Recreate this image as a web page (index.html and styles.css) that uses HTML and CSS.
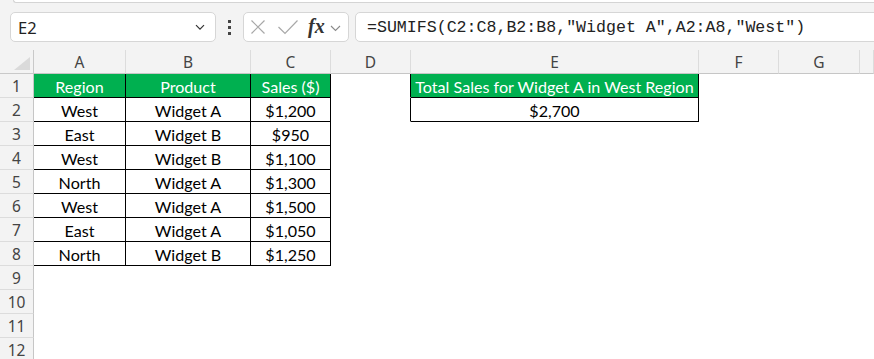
FILE: index.html
```html
<!DOCTYPE html>
<html>
<head>
<meta charset="utf-8">
<link rel="stylesheet" href="styles.css">
</head>
<body>
<div class="ribbon-edge"></div>
<div class="formula-bar">
  <div class="namebox">
    <span class="ref">E2</span>
    <svg class="nb-chev" width="10" height="7" viewBox="0 0 10 7"><path d="M1 1.2L5 5.2L9 1.2" fill="none" stroke="#333" stroke-width="1.2"/></svg>
  </div>
  <div class="dots"><span></span><span></span><span></span></div>
  <div class="fxbox">
    <svg class="ic-x" width="16" height="16" viewBox="0 0 16 16"><path d="M1.5 1.5L14.5 14.5M14.5 1.5L1.5 14.5" fill="none" stroke="#a8a8a8" stroke-width="1.2"/></svg>
    <svg class="ic-ok" width="22" height="16" viewBox="0 0 22 16"><path d="M1.5 8L8 14.5L20.5 1.5" fill="none" stroke="#a8a8a8" stroke-width="1.2"/></svg>
    <span class="fx">fx</span>
    <svg class="fx-chev" width="11" height="7" viewBox="0 0 11 7"><path d="M1 1L5.5 5.5L10 1" fill="none" stroke="#8a8a8a" stroke-width="1.1"/></svg>
  </div>
  <div class="formula">=SUMIFS(C2:C8,B2:B8,"Widget A",A2:A8,"West")</div>
</div>

<div class="sheet">
  <div class="corner"><svg width="34" height="24" viewBox="0 0 34 24"><path d="M30 7L30 20L14 20Z" fill="#dadada"/></svg></div>
  <div class="ch">A</div><div class="ch">B</div><div class="ch">C</div><div class="ch">D</div><div class="ch">E</div><div class="ch">F</div><div class="ch">G</div><div class="ch"></div>

  <div class="rh">1</div>
  <div class="c hd">Region</div><div class="c hd">Product</div><div class="c hd">Sales ($)</div>
  <div class="c rb"></div><div class="c hd">Total Sales for Widget A in West Region</div><div class="c"></div><div class="c"></div><div class="c"></div>

  <div class="rh">2</div>
  <div class="c bd">West</div><div class="c bd">Widget A</div><div class="c bd">$1,200</div>
  <div class="c rb"></div><div class="c bd">$2,700</div><div class="c"></div><div class="c"></div><div class="c"></div>

  <div class="rh">3</div>
  <div class="c bd">East</div><div class="c bd">Widget B</div><div class="c bd">$950</div>
  <div class="c"></div><div class="c"></div><div class="c"></div><div class="c"></div><div class="c"></div>

  <div class="rh">4</div>
  <div class="c bd">West</div><div class="c bd">Widget B</div><div class="c bd">$1,100</div>
  <div class="c"></div><div class="c"></div><div class="c"></div><div class="c"></div><div class="c"></div>

  <div class="rh">5</div>
  <div class="c bd">North</div><div class="c bd">Widget A</div><div class="c bd">$1,300</div>
  <div class="c"></div><div class="c"></div><div class="c"></div><div class="c"></div><div class="c"></div>

  <div class="rh">6</div>
  <div class="c bd">West</div><div class="c bd">Widget A</div><div class="c bd">$1,500</div>
  <div class="c"></div><div class="c"></div><div class="c"></div><div class="c"></div><div class="c"></div>

  <div class="rh">7</div>
  <div class="c bd">East</div><div class="c bd">Widget A</div><div class="c bd">$1,050</div>
  <div class="c"></div><div class="c"></div><div class="c"></div><div class="c"></div><div class="c"></div>

  <div class="rh">8</div>
  <div class="c bd">North</div><div class="c bd">Widget B</div><div class="c bd">$1,250</div>
  <div class="c"></div><div class="c"></div><div class="c"></div><div class="c"></div><div class="c"></div>

  <div class="rh">9</div>
  <div class="c"></div><div class="c"></div><div class="c"></div><div class="c"></div><div class="c"></div><div class="c"></div><div class="c"></div><div class="c"></div>

  <div class="rh">10</div>
  <div class="c"></div><div class="c"></div><div class="c"></div><div class="c"></div><div class="c"></div><div class="c"></div><div class="c"></div><div class="c"></div>

  <div class="rh">11</div>
  <div class="c"></div><div class="c"></div><div class="c"></div><div class="c"></div><div class="c"></div><div class="c"></div><div class="c"></div><div class="c"></div>

  <div class="rh">12</div>
  <div class="c"></div><div class="c"></div><div class="c"></div><div class="c"></div><div class="c"></div><div class="c"></div><div class="c"></div><div class="c"></div>
</div>
</body>
</html>
```

FILE: styles.css
```css
* { box-sizing: border-box; }

html, body {
  margin: 0;
  padding: 0;
  width: 874px;
  height: 359px;
  overflow: hidden;
  background: #f3f3f3;
  font-family: "Noto Sans", "Open Sans", sans-serif;
}

.ribbon-edge {
  height: 3px;
  margin-left: 13px;
  background: #ffffff;
  border-bottom: 1px solid #d4d4d4;
  border-left: 1px solid #d4d4d4;
  border-bottom-left-radius: 5px;
}

.formula-bar {
  height: 47px;
  display: flex;
  align-items: flex-start;
  padding-top: 9px;
  padding-left: 10px;
}

.namebox {
  width: 206px;
  height: 30px;
  background: #fff;
  border: 1px solid #d6d6d6;
  border-radius: 5px;
  display: flex;
  align-items: center;
  justify-content: space-between;
  padding: 0 10px 0 7px;
}

.ref {
  font-family: "Noto Sans", sans-serif;
  font-size: 16.5px;
  color: #222;
}

.dots {
  width: 27px;
  height: 30px;
  display: flex;
  flex-direction: column;
  align-items: center;
  justify-content: center;
  gap: 3px;
}

.dots span {
  display: block;
  width: 3px;
  height: 3px;
  background: #444;
}

.fxbox {
  width: 106px;
  height: 30px;
  background: #fff;
  border: 1px solid #d6d6d6;
  border-radius: 5px;
  display: flex;
  align-items: center;
  padding-left: 6px;
}

.ic-x { margin-right: 11px; }
.ic-ok { margin-right: 9px; }

.fx {
  font-family: "Liberation Serif", "DejaVu Serif", serif;
  font-style: italic;
  font-weight: bold;
  font-size: 20px;
  color: #333;
  letter-spacing: 0px;
  margin-top: -2px;
}

.fx-chev { margin-left: 5px; margin-top: 2px; }

.formula {
  flex: 1;
  margin-left: 6px;
  margin-right: -20px;
  height: 30px;
  background: #fff;
  border: 1px solid #d6d6d6;
  border-radius: 5px;
  padding-left: 11px;
  display: flex;
  align-items: center;
  font-family: "Liberation Mono", "DejaVu Sans Mono", monospace;
  font-size: 16.6px;
  color: #222;
  white-space: pre;
}

.sheet {
  display: grid;
  grid-template-columns: 34px 92px 125px 80px 80px 288px 80px 81px 1fr;
  grid-auto-rows: 24px;
  background: #fff;
}

.corner {
  background: #f3f3f3;
  border-right: 1px solid #c9c9c9;
  border-bottom: 1px solid #c9c9c9;
}

.corner svg { display: block; }

.ch {
  background: #f3f3f3;
  border-right: 1px solid #dcdcdc;
  border-bottom: 1px solid #c6c6c6;
  color: #444;
  font-size: 15.5px;
  display: flex;
  align-items: center;
  justify-content: center;
}

.rh {
  background: #f3f3f3;
  border-right: 1px solid #c6c6c6;
  border-bottom: 1px solid #dcdcdc;
  color: #444;
  font-size: 15.5px;
  display: flex;
  align-items: center;
  justify-content: center;
}

.c {
  background: #fff;
  border-right: 1px solid #fff;
  border-bottom: 1px solid #fff;
  font-family: "Lato", "Liberation Sans", sans-serif;
  font-size: 16.1px;
  color: #000;
  display: flex;
  align-items: center;
  justify-content: center;
  white-space: nowrap;
  padding-top: 1px;
}

.c.hd {
  background: #00b050;
  color: #fff;
  border-right-color: #000;
  border-bottom-color: #000;
}

.c.bd {
  border-right-color: #000;
  border-bottom-color: #000;
}

.c.rb {
  border-right-color: #000;
}
```
